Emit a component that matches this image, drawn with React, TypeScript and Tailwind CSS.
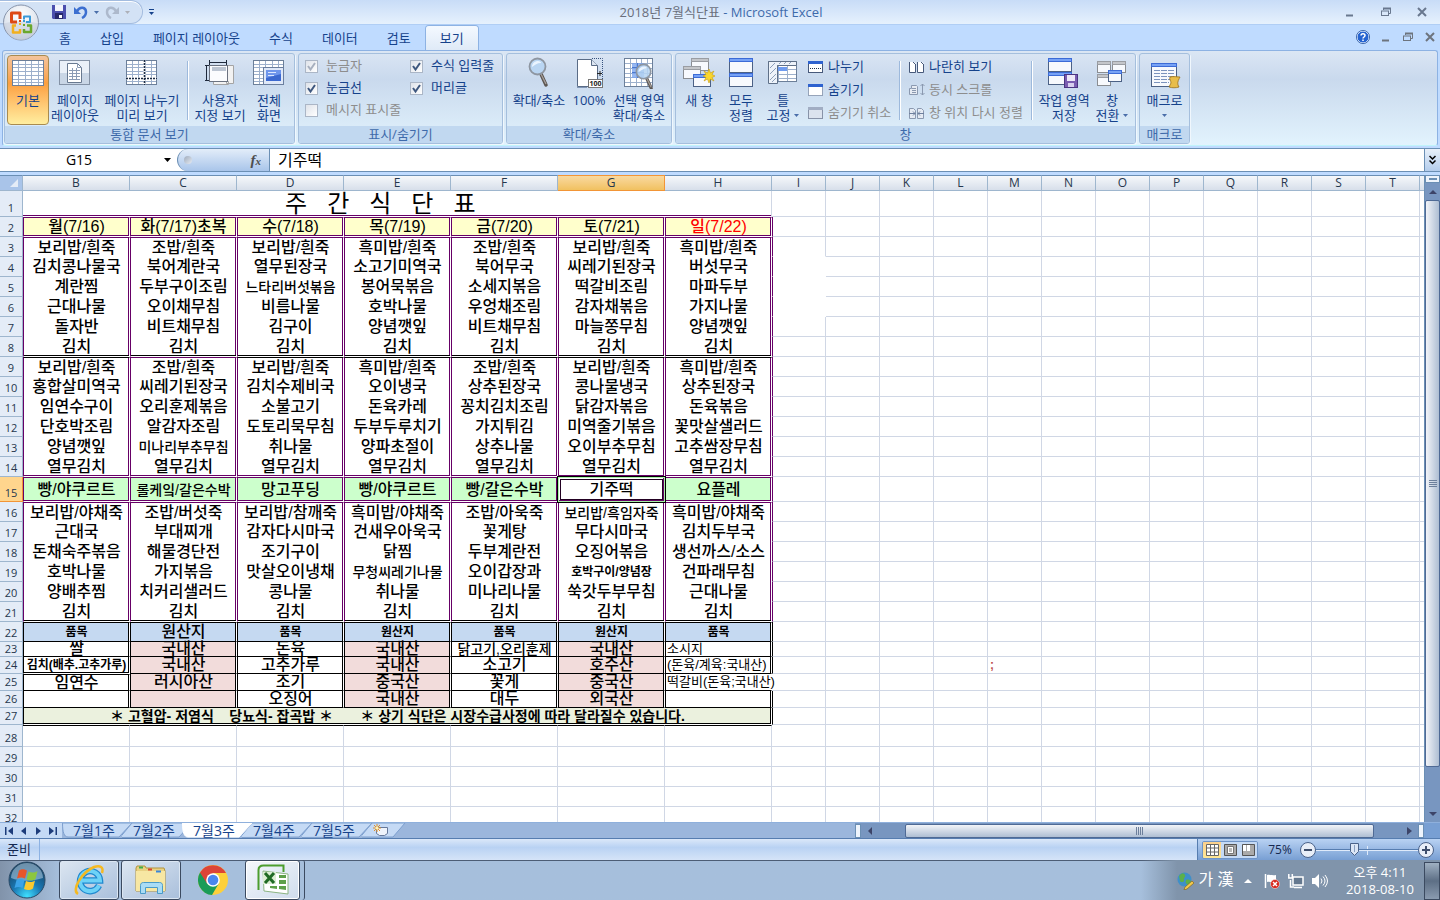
import type { ReactNode } from "react";
import clsx from "clsx";

type Size = "md" | "sm" | "xs";
type Cell = string | [string, Size];

const PLAIN_COLUMNS = ["I", "J", "K", "L", "M", "N", "O", "P", "Q", "R", "S", "T"];
const MENU_COLUMNS = ["B", "C", "D", "E", "F", "G", "H"];

const rowHeights: Record<number, number> = {
  1: 26, 15: 25, 23: 15, 24: 17, 25: 17, 26: 17, 27: 17, 28: 22,
};

const menuRows: Record<number, Cell[]> = {
  2: ["월(7/16)", "화(7/17)초복", "수(7/18)", "목(7/19)", "금(7/20)", "토(7/21)", "일(7/22)"],
  3: ["보리밥/흰죽", "조밥/흰죽", "보리밥/흰죽", "흑미밥/흰죽", "조밥/흰죽", "보리밥/흰죽", "흑미밥/흰죽"],
  4: ["김치콩나물국", "북어계란국", "열무된장국", "소고기미역국", "북어무국", "씨레기된장국", "버섯무국"],
  5: ["계란찜", "두부구이조림", ["느타리버섯볶음", "sm"], "봉어묵볶음", "소세지볶음", "떡갈비조림", "마파두부"],
  6: ["근대나물", "오이채무침", "비름나물", "호박나물", "우엉채조림", "감자채볶음", "가지나물"],
  7: ["돌자반", "비트채무침", "김구이", "양념깻잎", "비트채무침", "마늘쫑무침", "양념깻잎"],
  8: ["김치", "김치", "김치", "김치", "김치", "김치", "김치"],
  9: ["보리밥/흰죽", "조밥/흰죽", "보리밥/흰죽", "흑미밥/흰죽", "조밥/흰죽", "보리밥/흰죽", "흑미밥/흰죽"],
  10: ["홍합살미역국", "씨레기된장국", "김치수제비국", "오이냉국", "상추된장국", "콩나물냉국", "상추된장국"],
  11: ["임연수구이", "오리훈제볶음", "소불고기", "돈육카레", "꽁치김치조림", "닭감자볶음", "돈육볶음"],
  12: ["단호박조림", "알감자조림", "도토리묵무침", "두부두루치기", "가지튀김", "미역줄기볶음", "꽃맛살샐러드"],
  13: ["양념깻잎", ["미나리부추무침", "sm"], "취나물", "양파초절이", "상추나물", "오이부추무침", "고추쌈장무침"],
  14: ["열무김치", "열무김치", "열무김치", "열무김치", "열무김치", "열무김치", "열무김치"],
  15: ["빵/야쿠르트", ["롤케잌/갈은수박", "sm"], "망고푸딩", "빵/야쿠르트", "빵/갈은수박", "기주떡", "요플레"],
  16: ["보리밥/야채죽", "조밥/버섯죽", "보리밥/참깨죽", "흑미밥/야채죽", "조밥/아욱죽", ["보리밥/흑임자죽", "sm"], "흑미밥/야채죽"],
  17: ["근대국", "부대찌개", "감자다시마국", "건새우아욱국", "꽃게탕", "무다시마국", "김치두부국"],
  18: ["돈채숙주볶음", "해물경단전", "조기구이", "닭찜", "두부계란전", "오징어볶음", "생선까스/소스"],
  19: ["호박나물", "가지볶음", "맛살오이냉채", ["무청씨레기나물", "sm"], "오이갑장과", ["호박구이/양념장", "xs"], "건파래무침"],
  20: ["양배추찜", "치커리샐러드", "콩나물", "취나물", "미나리나물", "쑥갓두부무침", "근대나물"],
  21: ["김치", "김치", "김치", "김치", "김치", "김치", "김치"],
  22: [["품목", "xs"], "원산지", ["품목", "xs"], ["원산지", "xs"], ["품목", "xs"], ["원산지", "xs"], ["품목", "xs"]],
  23: ["쌀", "국내산", "돈육", "국내산", ["닭고기,오리훈제", "sm"], "국내산", "소시지"],
  24: [["김치(배추.고추가루)", "xs"], "국내산", "고추가루", "국내산", "소고기", "호주산", "(돈육/계육:국내산)"],
  25: ["임연수", "러시아산", "조기", "중국산", "꽃게", "중국산", "떡갈비(돈육;국내산)"],
  26: ["", "", "오징어", "국내산", "대두", "외국산", ""],
};

const TITLE = "주   간   식   단   표     ";
const NOTE = "＊ 고혈압- 저염식    당뇨식- 잡곡밥 ＊       ＊ 상기 식단은 시장수급사정에 따라 달라질수 있습니다.";

const sizeClass: Record<Size, string> = {
  md: "text-[16px] font-medium",
  sm: "text-[14px] font-medium",
  xs: "text-[12px] font-bold",
};

// Double rules are one line inside this cell, a white gap, and one line in the next cell.
const getCellBorder = (row: number, col: number) => {
  if (row === 24 && col === 0) {
    return "border-l border-l-black border-b border-b-white shadow-[inset_-1px_-1px_0_0_#000]";
  }
  if (row === 25 && col === 0) {
    return "border-l border-l-black border-t border-t-black border-b border-b-black shadow-[inset_-1px_0_0_0_#000]";
  }
  if (row === 25 && col === 6) {
    return "border-l border-l-black border-b border-b-black";
  }
  if (row === 22) {
    return "border-l border-l-black border-t border-t-black border-b border-b-black shadow-[inset_-1px_0_0_0_#000]";
  }
  if (row > 22) {
    return "border-l border-l-black border-b border-b-black shadow-[inset_-1px_0_0_0_#000]";
  }
  if (row === 2 || row === 15) {
    return "border-l border-l-[#660066] border-t border-t-[#660066] border-b border-b-white shadow-[inset_-1px_-1px_0_0_#660066]";
  }
  if (row === 14) {
    return "border-l border-l-[#660066] border-b border-b-white shadow-[inset_-1px_-1px_0_0_#660066]";
  }
  if (row === 8 || row === 21) {
    return "border-l border-l-[#660066] border-b border-b-white shadow-[inset_0_-1px_0_0_#000,inset_-1px_0_0_0_#660066]";
  }
  if (row === 9 && col !== 1) {
    return "border-l border-l-[#660066] border-t border-t-black shadow-[inset_-1px_0_0_0_#660066]";
  }
  if (row === 3 || row === 9 || row === 16) {
    return "border-l border-l-[#660066] border-t border-t-[#660066] shadow-[inset_-1px_0_0_0_#660066]";
  }
  return "border-l border-l-[#660066] shadow-[inset_-1px_0_0_0_#660066]";
};

const getCellFill = (row: number, col: number) => {
  if (row === 2) return "bg-[#ffffcc]";
  if (row === 15) return col === 5 ? "bg-white" : "bg-[#ccffcc]";
  if (row === 22) return "bg-[#c5d9f1]";
  if (row > 22 && col % 2 === 1) return "bg-[#f2dcdb]";
  return "bg-white";
};

const MenuCell = ({ cell, row, col }: { cell: Cell; row: number; col: number }) => {
  const [text, size]: [string, Size] = typeof cell === "string" ? [cell, "md"] : cell;
  const isSource = col === 6 && row > 22;
  const isSelected = row === 15 && col === 5;

  return (
    <td
      className={clsx(
        "border-r border-r-white p-0 whitespace-nowrap leading-[14px]",
        getCellBorder(row, col),
        getCellFill(row, col),
        row === 2 && col === 6 ? "text-[#ff0000]" : "text-black",
        isSource ? "text-left text-[13px]" : "text-center",
        !isSource && sizeClass[size],
        isSelected && "relative",
      )}
    >
      {isSelected && (
        <span className="pointer-events-none absolute -inset-0.5 border border-black">
          <span className="absolute inset-0 border border-[#a8f0a8]" />
          <span className="absolute inset-0.5 border border-[#220022]" />
        </span>
      )}
      <span className={clsx("flex h-[14px] items-center", isSource ? "pl-px" : "justify-center")}>{text}</span>
    </td>
  );
};

const PlainCells = ({ row }: { row: number }) => (
  <>
    {PLAIN_COLUMNS.map((letter) => {
      const isBlank = letter === "I" && row >= 3 && row <= 6;
      return (
        <td
          key={letter}
          className={clsx(
            "border-r border-b p-0 pl-0.5 text-[12px] leading-[14px] font-bold text-[#c0504d]",
            isBlank && row > 3 ? "border-r-white" : "border-r-[#d0d7e5]",
            isBlank ? "border-b-white" : "border-b-[#d0d7e5]",
            letter === "I" && row > 1 && row < 22 && "border-l border-l-[#660066]",
            letter === "I" && row > 21 && row < 28 && row !== 25 && "border-l border-l-black",
          )}
        >
          {letter === "M" && row === 24 ? ";" : null}
        </td>
      );
    })}
    <td className="border-b border-[#d0d7e5] p-0" />
  </>
);

const Sheet = () => (
  <div className="min-w-0 flex-1 overflow-hidden bg-white">
    <table className="w-full table-fixed border-separate border-spacing-0 font-['Liberation_Sans','Noto_Sans_CJK_KR',sans-serif]">
      <colgroup>
        <col className="w-[23px]" />
        {MENU_COLUMNS.map((letter) => <col key={letter} className="w-[107px]" />)}
        {PLAIN_COLUMNS.map((letter) => <col key={letter} className="w-[54px]" />)}
        <col />
      </colgroup>
      <thead>
        <tr className="h-4 bg-linear-to-b from-[#f8fafc] to-[#d5dde9] font-['Open_Sans','Noto_Sans_CJK_KR',sans-serif]">
          <th className="border-t border-r border-b border-[#9eb6ce] border-t-[#6b8fb4] bg-[#a9c4e9] p-0">
            <svg className="ml-auto mr-1 block h-2 w-2" viewBox="0 0 8 8"><path d="M8 0v8H0z" fill="#e4ecf7" /></svg>
          </th>
          {[...MENU_COLUMNS, ...PLAIN_COLUMNS].map((letter) => (
            <th
              key={letter}
              className={clsx(
                "border-t border-r border-b p-0 text-center text-[12px] leading-[14px] font-normal text-[#26374d]",
                letter === "G"
                  ? "border-[#f29536] bg-linear-to-b from-[#f9d99f] to-[#f1c15f]"
                  : "border-[#9eb6ce] border-t-[#6b8fb4]",
              )}
            >
              {letter}
            </th>
          ))}
          <th className="border-t border-b border-[#9eb6ce] border-t-[#6b8fb4] p-0" />
        </tr>
      </thead>
      <tbody>
        {Array.from({ length: 32 }, (_, index) => index + 1).map((row) => (
          <tr key={row} style={{ height: rowHeights[row] ?? 20 }}>
            <th
              scope="row"
              className={clsx(
                "border-r border-b p-0 text-center align-bottom font-['Open_Sans','Noto_Sans_CJK_KR',sans-serif] text-[11px] leading-[14px] font-normal text-[#26374d]",
                row !== 23 && "pb-px",
                row === 15 ? "border-[#f29536] bg-[#ffd58d]" : "border-[#9eb6ce] bg-[#e4ecf7]",
              )}
            >
              {row}
            </th>
            {row === 1 && (
              <td
                colSpan={7}
                className="border-r border-b border-r-[#d0d7e5] border-b-white p-0 text-center text-[24px] leading-6 whitespace-pre shadow-[inset_0_-1px_0_0_#660066]"
              >
                {TITLE}
              </td>
            )}
            {row === 27 && (
              <td
                colSpan={7}
                className="border-r border-b border-l border-r-white border-b-white border-l-black bg-[#ebf1de] p-0 text-center text-[14px] leading-[14px] font-bold whitespace-pre shadow-[inset_-1px_-1px_0_0_#000]"
              >
                {NOTE}
              </td>
            )}
            {menuRows[row]?.map((cell, col) => <MenuCell key={col} cell={cell} row={row} col={col} />)}
            {row > 27 && MENU_COLUMNS.map((letter) => (
              <td
                key={letter}
                className={clsx("border-r border-b border-[#d0d7e5] p-0", row === 28 && "border-t border-t-black")}
              />
            ))}
            <PlainCells row={row} />
          </tr>
        ))}
      </tbody>
    </table>
  </div>
);

/* ---------- icons ---------- */

const GridLines = ({ x, y, w, h, cols, rows }: { x: number; y: number; w: number; h: number; cols: number; rows: number }) => (
  <g>
    <rect x={x + 0.5} y={y + 0.5} width={w - 1} height={h - 1} fill="#fff" stroke="#6c7f99" />
    {Array.from({ length: cols - 1 }, (_, i) => (
      <path key={`c${i}`} d={`M${x + Math.round(((i + 1) * w) / cols) + 0.5} ${y + 1}v${h - 2}`} stroke="#9db0cc" />
    ))}
    {Array.from({ length: rows - 1 }, (_, i) => (
      <path key={`r${i}`} d={`M${x + 1} ${y + Math.round(((i + 1) * h) / rows) + 0.5}h${w - 2}`} stroke="#9db0cc" />
    ))}
  </g>
);

const MiniWindow = ({ x, y, w, h, tone = "blue" }: { x: number; y: number; w: number; h: number; tone?: "blue" | "gray" }) => (
  <g>
    <rect x={x + 0.5} y={y + 0.5} width={w - 1} height={h - 1} fill="#f7f9fd" stroke={tone === "blue" ? "#4c6185" : "#8a8d92"} />
    <rect x={x} y={y} width={w} height="4" fill={tone === "blue" ? "#3c6bd6" : "#9a9da3"} />
    <rect x={x + 1} y={y + 1} width={w - 2} height="2" fill={tone === "blue" ? "#77a2f5" : "#c4c6ca"} />
  </g>
);

const Icon = ({ children }: { children: ReactNode }) => (
  <svg className="mx-auto block h-8 w-8 shrink-0" viewBox="0 0 32 32" fill="none" aria-hidden="true">{children}</svg>
);

const NormalIcon = () => <Icon><GridLines x={0} y={3} w={32} h={26} cols={5} rows={7} /></Icon>;

const PageLayoutIcon = () => (
  <Icon>
    <rect x="0.5" y="3.5" width="30" height="24" fill="#eaf0f8" stroke="#8492a6" />
    <path d="M1 16h29v11H1z" fill="#c9d6e6" />
    <path d="M8.5 6.5h10l4 4v15h-14z" fill="#fff" stroke="#687990" />
    <path d="M18.5 6.5v4h4M10 13.5h11M10 16.5h11M10 19.5h11M10 22.5h11M13.5 11v12M17.5 11v12" stroke="#8a9bb5" />
  </Icon>
);

const PageBreakIcon = () => (
  <Icon>
    <GridLines x={0} y={3} w={31} h={25} cols={5} rows={7} />
    <path d="M18.5 3v25M0 21.5h31" stroke="#fff" strokeWidth="2" />
    <path d="M18.5 3v25M0 21.5h31" stroke="#1d2c44" strokeWidth="1.6" strokeDasharray="2 1" />
  </Icon>
);

const CustomViewIcon = () => (
  <Icon>
    <path d="M22.5 8.5h7v18h-7zM9.5 24.5h15v3h-15z" fill="#f2f2f2" stroke="#a4a4a4" />
    <rect x="5.500" y="8.500" width="18" height="16" fill="#fbfcfe" stroke="#6b7280" />
    <rect x="8" y="10" width="14" height="4" fill="#bcc5d2" />
    <path d="M5 5.500h18M5.500 3v5M22.500 3v5M2.500 8v16M1 8.500h4M1 23.500h4" stroke="#1e293b" />
  </Icon>
);

const FullScreenIcon = () => (
  <Icon>
    <GridLines x={0} y={3} w={31} h={25} cols={5} rows={7} />
    <rect x="10.500" y="10.500" width="20" height="17" fill="#dfe8f8" stroke="#6b7f9f" />
    <rect x="13" y="13" width="15" height="11" fill="#3c69d0" />
    <path d="M13 13h15v4l-15 4z" fill="#6f96ec" />
    <path d="M15 15.500h8M15 18.500h6" stroke="#dbe7ff" />
  </Icon>
);

const Magnifier = ({ x = 0, y = 0 }: { x?: number; y?: number }) => (
  <g transform={`translate(${x} ${y})`}>
    <path d="M13 17l5 11" stroke="#5d5753" strokeWidth="3.500" strokeLinecap="round" />
    <path d="M13 17l5 10" stroke="#a8a29c" strokeWidth="1.200" />
    <circle cx="9.500" cy="9.500" r="8" fill="#b5d3f2" fillOpacity=".85" stroke="#8e96a1" strokeWidth="1.800" />
    <path d="M4 10c0-4 3-6 6-6 2 0 3 1 3 2-4 0-6 2-9 4z" fill="#eaf4ff" />
  </g>
);

const ZoomIcon = () => <Icon><Magnifier x={5} /></Icon>;

const HundredIcon = () => (
  <Icon>
    <path d="M4.500 2.500h14l6 6v21h-20z" fill="#fff" stroke="#5a6c86" />
    <path d="M18.500 2.500v6h6" fill="#dce5f1" stroke="#5a6c86" />
    <path d="M19 1.500h10.500v22M4.500 30.500h10" stroke="#35507c" strokeDasharray="1 1" />
    <path d="M24 16.500h5M27 14v5" stroke="#222" />
    <rect x="15.500" y="22.500" width="14" height="8" fill="#fff" stroke="#777" />
    <text x="22.500" y="29" textAnchor="middle" fontSize="7" fontWeight="700" fill="#222">100</text>
  </Icon>
);

const ZoomSelectionIcon = () => (
  <Icon>
    <GridLines x={1} y={1} w={29} h={29} cols={5} rows={6} />
    <path d="M9 6h12v15H9z" fill="#7ba5ef" fillOpacity=".8" />
    <path d="M9 10.500h12M9 15.500h12M14.500 6v15" stroke="#4a78d0" />
    <g transform="translate(12 6) scale(.9)"><Magnifier /></g>
  </Icon>
);

const NewWindowIcon = () => (
  <Icon>
    <MiniWindow x={8} y={1} w={18} h={13} tone="gray" />
    <MiniWindow x={0} y={9} w={18} h={13} tone="gray" />
    <MiniWindow x={10} y={17} w={18} h={13} />
    <path d="M26 12l1.500 4 3.500-2-2 3.500 3 1.500-3 1.500 2 3.500-3.500-2-1.500 4-1.500-4-3.500 2 2-3.500-3-1.500 3-1.500-2-3.500 3.500 2z" fill="#f9d62e" stroke="#c69a10" strokeWidth=".6" />
  </Icon>
);

const ArrangeIcon = () => (
  <Icon><MiniWindow x={4} y={1} w={24} h={15} /><MiniWindow x={4} y={16} w={24} h={14} /></Icon>
);

const FreezeIcon = () => (
  <Icon>
    <GridLines x={1} y={4} w={29} h={21} cols={3} rows={5} />
    <path d="M1.500 4.500h28v4h-19v18h-9z" fill="#eef3fa" stroke="#5f7088" />
    <path d="M3 11l5-5M3 17l6-6M3 23l6-6M12 7l2-2M17 7l2-2M22 7l2-2M5 25l4-4" stroke="#8da0bb" />
    <path d="M10.500 8.500v16" stroke="#5f7088" />
    <rect x="11" y="10" width="9" height="4" fill="#6f9cf0" />
  </Icon>
);

const SaveWorkspaceIcon = () => (
  <Icon>
    <MiniWindow x={0} y={1} w={24} h={14} />
    <MiniWindow x={0} y={15} w={24} h={13} />
    <rect x="16.500" y="17.500" width="13" height="13" fill="#7a5cb0" stroke="#4b3582" />
    <path d="M19 18h8v6h-8z" fill="#eee9f8" />
    <path d="M20 26h6v4h-6z" fill="#d8cfee" />
  </Icon>
);

const SwitchWindowIcon = () => (
  <Icon>
    <MiniWindow x={1} y={4} w={14} h={12} tone="gray" />
    <MiniWindow x={16} y={4} w={14} h={12} tone="gray" />
    <MiniWindow x={1} y={17} w={14} h={12} tone="gray" />
    <MiniWindow x={12} y={13} w={14} h={12} />
  </Icon>
);

const MacroIcon = () => (
  <Icon>
    <MiniWindow x={2} y={6} w={26} h={24} />
    <path d="M5 13.500h20M5 16.500h20M5 19.500h20M5 22.500h16M5 25.500h15" stroke="#7b93bd" strokeDasharray="6 1" />
    <path d="M21 20c3-1 8 0 10 0-1 2-3 5-2 8l1 2c-3 1-7 1-10 0l2-4c0-2-2-4-1-6z" fill="#e8bd4a" stroke="#9a7016" strokeWidth=".8" />
  </Icon>
);

type SmallKind = "split" | "hide" | "unhide" | "side" | "sync" | "reset";

const SmallIcon = ({ kind }: { kind: SmallKind }) => (
  <svg className="block h-4 w-4 shrink-0" viewBox="0 0 16 16" fill="none" aria-hidden="true">
    {(kind === "split" || kind === "hide" || kind === "unhide") && (
      <>
        <rect x=".5" y="2.500" width="14" height="11" fill={kind === "unhide" ? "#dbe3ee" : "#fff"} stroke={kind === "unhide" ? "#8793a8" : "#47597a"} strokeDasharray={kind === "hide" ? "1 1" : undefined} />
        <path d="M0 2h15v3H0z" fill={kind === "unhide" ? "#a1adc3" : "#2e62cf"} />
      </>
    )}
    {kind === "split" && <path d="M2 9.500h11" stroke="#1f2f4a" strokeDasharray="1 1" />}
    {kind === "side" && (
      <>
        <path d="M1 3h4l2 2v8H1zM9 3h4l2 2v8H9z" fill="#fff" />
        <path d="M.5 3v10.500h6V5M8.500 3v10.500h6V5M4 3l2.500 2.500M12 3l2.500 2.500" stroke="#47597a" />
      </>
    )}
    {kind === "sync" && (
      <>
        <path d="M.5 6.500h2v-3h5l1 1v8h-8z" fill="#e6ebf3" stroke="#8b99b0" />
        <path d="M3 6.500h4M3 8.500h4M3 10.500h4M13.500 2v11M11.500 4l2-2 2 2M11.500 11l2 2 2-2" stroke="#8b99b0" />
      </>
    )}
    {kind === "reset" && (
      <>
        <path d="M.5 3.500h4l2 2v8h-6zM8.500 3.500h4l2 2v8h-6z" fill="#e6ebf3" stroke="#8b99b0" />
        <path d="M0 8.500h6M4 6.500l2 2-2 2M15 8.500H9M11 6.500l-2 2 2 2" stroke="#6d7f9d" />
      </>
    )}
  </svg>
);

/* ---------- ribbon ---------- */

const DownArrow = ({ className = "text-[#4a6ea9]" }: { className?: string }) => (
  <svg className={clsx("inline-block h-[3px] w-[5px] shrink-0", className)} viewBox="0 0 5 3" aria-hidden="true"><path d="M0 0h5L2.500 3z" fill="currentColor" /></svg>
);

type BigButtonProps = {
  icon: ReactNode;
  lines: string[];
  width: string;
  hasMenu?: boolean;
  isActive?: boolean;
};

const BigButton = ({ icon, lines, width, hasMenu, isActive }: BigButtonProps) => (
  <button
    type="button"
    className={clsx(
      "flex h-[70px] shrink-0 flex-col items-center rounded-sm border pt-px whitespace-nowrap",
      width,
      isActive
        ? "border-[#a98b4f] bg-linear-to-b from-[#f3c49c] via-[#fb9f3f] via-40% to-[#ffee9f]"
        : "border-transparent",
    )}
  >
    {icon}
    <span className="mt-1 block h-[15px] leading-[15px]">{lines[0]}</span>
    <span className="flex h-[15px] items-center gap-1 leading-[15px]">
      {lines[1]}
      {hasMenu && <DownArrow />}
    </span>
  </button>
);

const Separator = () => <div className="mx-1 my-1.5 w-0.5 shrink-0 border-l border-[#9db9dc] bg-white" />;

const RibbonGroup = ({ title, width, children }: { title: string; width: string; children: ReactNode }) => (
  <section className={clsx("flex h-[91px] shrink-0 flex-col overflow-hidden rounded-[3px] border border-[#a5bfdd] shadow-[1px_1px_0_#f0f7fd]", width)}>
    <div className="flex h-[72px] px-0.5 pt-px">{children}</div>
    <h2 className="flex-1 bg-[#c1d8f0] text-center text-[13px] leading-4 text-[#3e6aaa]">{title}</h2>
  </section>
);

const Check = ({ label, checked, disabled }: { label: string; checked?: boolean; disabled?: boolean }) => (
  <label className={clsx("flex h-[22px] items-center gap-2 whitespace-nowrap", disabled && "text-[#8d8d8d]")}>
    <span className="relative block h-[13px] w-[13px]">
      <input
        type="checkbox"
        defaultChecked={checked}
        disabled={disabled}
        className="block h-[13px] w-[13px] appearance-none border border-[#abb6c6] bg-linear-to-br from-[#dfe3ea] to-white"
      />
      {checked && (
        <svg className="pointer-events-none absolute inset-0 h-[13px] w-[13px]" viewBox="0 0 13 13" fill="none">
          <path d="M3 6l2.500 3.500L10 3" stroke={disabled ? "#a7b0bf" : "#3f587f"} strokeWidth="2" />
        </svg>
      )}
    </span>
    {label}
  </label>
);

const SmallButton = ({ kind, label, disabled }: { kind: SmallKind; label: string; disabled?: boolean }) => (
  <button type="button" disabled={disabled} className={clsx("flex h-[23px] items-center gap-1 whitespace-nowrap", disabled && "text-[#8d8d8d]")}>
    <SmallIcon kind={kind} />
    {label}
  </button>
);

const Ribbon = () => (
  <div className="mx-0.5 flex h-[96px] shrink-0 gap-[3px] overflow-hidden rounded-[3px] border border-[#8db2e3] border-b-[#c0f4fb] bg-linear-to-b from-[#dbe6f4] via-[#c9d9ed] via-30% to-[#e2f3fd] pt-0.5 pl-px text-[13px] text-[#15428b]">
    <RibbonGroup title="통합 문서 보기" width="w-[291px]">
      <BigButton icon={<NormalIcon />} lines={["기본"]} width="w-[42px]" isActive />
      <BigButton icon={<PageLayoutIcon />} lines={["페이지", "레이아웃"]} width="w-[52px]" />
      <BigButton icon={<PageBreakIcon />} lines={["페이지 나누기", "미리 보기"]} width="w-[82px]" />
      <Separator />
      <BigButton icon={<CustomViewIcon />} lines={["사용자", "지정 보기"]} width="w-[54px]" />
      <BigButton icon={<FullScreenIcon />} lines={["전체", "화면"]} width="w-[44px]" />
    </RibbonGroup>
    <RibbonGroup title="표시/숨기기" width="w-[205px]">
      <div className="grid grid-cols-[105px_1fr] content-start pl-1">
        <Check label="눈금자" checked disabled />
        <Check label="수식 입력줄" checked />
        <Check label="눈금선" checked />
        <Check label="머리글" checked />
        <Check label="메시지 표시줄" disabled />
      </div>
    </RibbonGroup>
    <RibbonGroup title="확대/축소" width="w-[166px]">
      <BigButton icon={<ZoomIcon />} lines={["확대/축소"]} width="w-[60px]" />
      <BigButton icon={<HundredIcon />} lines={["100%"]} width="w-[40px]" />
      <BigButton icon={<ZoomSelectionIcon />} lines={["선택 영역", "확대/축소"]} width="w-[60px]" />
    </RibbonGroup>
    <RibbonGroup title="창" width="w-[461px]">
      <BigButton icon={<NewWindowIcon />} lines={["새 창"]} width="w-[42px]" />
      <BigButton icon={<ArrangeIcon />} lines={["모두", "정렬"]} width="w-[42px]" />
      <BigButton icon={<FreezeIcon />} lines={["틀", "고정"]} width="w-[42px]" hasMenu />
      <div className="ml-1 w-[87px]">
        <SmallButton kind="split" label="나누기" />
        <SmallButton kind="hide" label="숨기기" />
        <SmallButton kind="unhide" label="숨기기 취소" disabled />
      </div>
      <Separator />
      <div className="ml-1 w-[118px]">
        <SmallButton kind="side" label="나란히 보기" />
        <SmallButton kind="sync" label="동시 스크롤" disabled />
        <SmallButton kind="reset" label="창 위치 다시 정렬" disabled />
      </div>
      <Separator />
      <BigButton icon={<SaveWorkspaceIcon />} lines={["작업 영역", "저장"]} width="w-[54px]" />
      <BigButton icon={<SwitchWindowIcon />} lines={["창", "전환"]} width="w-[42px]" hasMenu />
    </RibbonGroup>
    <RibbonGroup title="매크로" width="w-[51px]">
      <BigButton icon={<MacroIcon />} lines={["매크로", ""]} width="w-[45px]" hasMenu />
    </RibbonGroup>
  </div>
);

/* ---------- title and tabs ---------- */

const WindowGlyph = ({ kind }: { kind: "min" | "restore" | "close" }) => (
  <svg className="block h-3 w-3" viewBox="0 0 12 12" fill="none" aria-hidden="true">
    {kind === "min" && <path d="M2 9.500h7" stroke="currentColor" strokeWidth="2" />}
    {kind === "restore" && (
      <>
        <path d="M3.500 4V2.500h7v5H9" stroke="currentColor" />
        <path d="M3 2.500h8" stroke="currentColor" strokeWidth="2" />
        <rect x="1.500" y="5" width="7" height="4.500" stroke="currentColor" />
      </>
    )}
    {kind === "close" && <path d="M2 2l8 8M10 2l-8 8" stroke="currentColor" strokeWidth="2" />}
  </svg>
);

const OfficeButton = () => (
  <button type="button" aria-label="Office" className="absolute top-1 left-0.5 z-10 h-[38px] w-[38px]">
    <svg viewBox="0 0 38 38" fill="none">
      <defs>
        <radialGradient id="orb" cx=".5" cy=".3" r=".8">
          <stop offset="0" stopColor="#fff" />
          <stop offset=".6" stopColor="#dfe5ee" />
          <stop offset="1" stopColor="#a9b6ca" />
        </radialGradient>
      </defs>
      <circle cx="19" cy="18.500" r="17.500" fill="url(#orb)" stroke="#8794ab" />
      <path d="M2.500 19.500c9-3 24-3 33 0a16.500 16.500 0 0 1-33 0z" fill="#c9d1de" fillOpacity=".6" />
      <path d="M15 18H9.500V9H18v6" stroke="#dd4814" strokeWidth="3" strokeLinejoin="round" />
      <path d="M22 15.500v-3h6V18h-4" stroke="#3a9ad9" strokeWidth="2" strokeLinejoin="round" />
      <path d="M14 21.500h-3v7h7V25" stroke="#f2b01e" strokeWidth="2.500" strokeLinejoin="round" />
      <path d="M25 21.500h4V28h-7v-3" stroke="#6aa82d" strokeWidth="2.500" strokeLinejoin="round" />
      <path d="M17 19h2v2h-2z" fill="#f2b01e" />
      <path d="M17 16h2v2h-2z" fill="#dd4814" />
      <path d="M21 16h2v2h-2z" fill="#3a9ad9" />
      <path d="M21 20h2v2h-2z" fill="#6aa82d" />
    </svg>
  </button>
);

const QuickAccess = () => (
  <div className="flex h-6 w-[143px] items-center rounded-r-full border border-l-0 border-[#a3bcdf] bg-[#d3e2f5] pl-[52px] shadow-[inset_0_1px_0_#fff]">
    <button type="button" aria-label="저장" className="mr-1.5">
      <svg className="block h-3.5 w-3.5" viewBox="0 0 14 14">
        <path d="M0 0h14v14H1l-1-1z" fill="#4b4fae" />
        <path d="M3 0h8v6H3z" fill="#f3f5fc" />
        <path d="M3 8h8v6H3z" fill="#26286b" />
        <path d="M7 10h3v3H7z" fill="#fff" />
      </svg>
    </button>
    <button type="button" aria-label="실행 취소" className="mr-1.5 ml-0.5 flex items-center gap-1.5">
      <svg className="block h-3.5 w-3.5" viewBox="0 0 14 14" fill="none">
        <path d="M3 6c3-5 9-4 9 1 0 3-2 5-4 6" stroke="#3c6fd0" strokeWidth="2.500" />
        <path d="M0 2v7h7z" fill="#3c6fd0" />
      </svg>
      <DownArrow />
    </button>
    <button type="button" aria-label="다시 실행" className="flex items-center gap-1.5">
      <svg className="block h-3.5 w-3.5" viewBox="0 0 14 14" fill="none">
        <path d="M11 6C8 1 2 2 2 7c0 3 2 5 4 6" stroke="#adb9cc" strokeWidth="2.500" />
        <path d="M14 2v7H7z" fill="#adb9cc" />
      </svg>
      <DownArrow className="text-[#adb0b8]" />
    </button>
  </div>
);

const TABS = ["홈", "삽입", "페이지 레이아웃", "수식", "데이터", "검토", "보기"];

const Header = () => (
  <header className="relative shrink-0">
    <OfficeButton />
    <div className="flex h-[25px] items-center border-b border-[#b0cef5] bg-linear-to-b from-[#c8dcf7] to-[#e6f1fd]">
      <QuickAccess />
      <button type="button" aria-label="도구 모음 사용자 지정" className="ml-1.5 flex flex-col items-center gap-0.5 text-[#15428b]">
        <span className="block h-px w-[5px] bg-[#15428b]" />
        <DownArrow className="text-[#15428b]" />
      </button>
      <h1 className="flex-1 pr-14 text-center text-[13px] leading-4 text-[#3e6aaa]">
        <span className="text-[#6a6f7c]">2018년 7월식단표</span> - Microsoft Excel
      </h1>
      <div className="flex gap-6 pr-3 text-[#69788f]">
        <button type="button" aria-label="최소화"><WindowGlyph kind="min" /></button>
        <button type="button" aria-label="이전 크기로"><WindowGlyph kind="restore" /></button>
        <button type="button" aria-label="닫기"><WindowGlyph kind="close" /></button>
      </div>
    </div>
    <div className="flex h-[25px] items-end gap-px bg-[#bfdbff] pl-[45px] text-[13px] text-[#15428b]">
      {TABS.map((tab) => (
        <button
          key={tab}
          type="button"
          className={clsx(
            "h-6 px-3.5 leading-6 whitespace-nowrap",
            tab === "보기" && "rounded-t-[3px] bg-linear-to-b from-[#f4f9ff] to-[#dfeaf7] shadow-[0_0_0_1px_#8db2e3]",
          )}
        >
          {tab}
        </button>
      ))}
      <div className="mb-1.5 ml-auto flex items-center gap-2.5 pr-1 text-[#6d747e]">
        <button type="button" aria-label="도움말">
          <svg className="block h-3.5 w-3.5" viewBox="0 0 14 14" fill="none">
            <circle cx="7" cy="7" r="6" fill="#2563d0" stroke="#e8f1ff" />
            <circle cx="7" cy="7" r="6.600" stroke="#24539e" strokeWidth=".8" />
            <path d="M5 5.500c0-2.500 4-2.500 4 0 0 1.500-2 1.500-2 3M7 9.500V11" stroke="#fff" strokeWidth="1.500" />
          </svg>
        </button>
        <button type="button" aria-label="창 최소화"><WindowGlyph kind="min" /></button>
        <button type="button" aria-label="창 복원"><WindowGlyph kind="restore" /></button>
        <button type="button" aria-label="창 닫기"><WindowGlyph kind="close" /></button>
      </div>
    </div>
  </header>
);

const FormulaBar = () => (
  <div className="mt-0.5 flex h-6 shrink-0 border-y border-[#6b8fb4] bg-white text-black">
    <div className="flex w-[177px] items-center">
      <input aria-label="이름 상자" defaultValue="G15" className="w-[158px] min-w-0 text-center text-[14px] leading-5" />
      <svg className="ml-1.5 h-1 w-[7px]" viewBox="0 0 7 4"><path d="M0 0h7L3.500 4z" fill="#000" /></svg>
    </div>
    <div className="flex w-[93px] items-center justify-between rounded-l-full border-x border-[#6b8fb4] bg-linear-to-b from-[#e3edf9] to-[#a9c5ea] pr-2 pl-1.5">
      <span className="block h-2 w-2 rounded-full bg-linear-to-br from-[#9fabbc] to-[#e6ebf2]" />
      <button type="button" aria-label="함수 삽입" className="font-['Liberation_Serif',serif] text-[15px] leading-5 font-bold text-[#4d4d4d] italic">
        f<span className="text-[11px]">x</span>
      </button>
    </div>
    <input aria-label="수식 입력줄" defaultValue="기주떡" className="min-w-0 flex-1 pl-2 text-[16px] leading-5" />
    <button type="button" aria-label="수식 입력줄 확장" className="flex w-4 items-center justify-center border-l border-[#6b8fb4] bg-linear-to-b from-[#e8f0fa] to-[#b4cdec]">
      <svg className="h-2.5 w-[7px]" viewBox="0 0 7 10" fill="none"><path d="M.5 1l3 3 3-3M.5 5.500l3 3 3-3" stroke="#000" strokeWidth="1.500" /></svg>
    </button>
  </div>
);

/* ---------- scroll bars, sheet tabs, status ---------- */

const Arrow = ({ d, className }: { d: string; className?: string }) => (
  <svg className={clsx("block h-2.5 w-2.5 shrink-0", className)} viewBox="0 0 10 10" aria-hidden="true"><path d={d} fill="currentColor" /></svg>
);

const VerticalScroll = () => (
  <div className="flex w-4 shrink-0 flex-col items-center border-l border-[#6b8fb4] bg-[#7896c0] text-[#3c4468]">
    <div className="flex h-2 w-full shrink-0 items-center justify-center border border-[#6b8fb4] bg-[#eef4fc]"><span className="h-0.5 w-2 bg-[#6b8fb4]" /></div>
    <button type="button" aria-label="위로" className="flex h-[17px] items-center"><Arrow d="M1 7l4-4 4 4z" /></button>
    <div className="flex w-full flex-1 flex-col pb-[38px]">
      <div className="flex w-full flex-1 flex-col items-center justify-center gap-px rounded-[2px] border border-[#4f6a95] bg-linear-to-r from-[#f2f4f8] to-[#aebed3]">
        {[0, 1, 2, 3].map((line) => <span key={line} className="h-px w-2 bg-[#6c7f9b]" />)}
      </div>
    </div>
    <button type="button" aria-label="아래로" className="flex h-[17px] items-center"><Arrow d="M1 3l4 4 4-4z" /></button>
  </div>
);

const SHEETS = ["7월1주", "7월2주", "7월3주", "7월4주", "7월5주"];

const SheetTabs = () => (
  <div className="flex h-4 shrink-0 border-t border-[#8fb0dc] bg-[#9bb6dc]">
    <div className="flex w-[62px] items-center justify-between bg-[#c5daf5] px-1 text-[#1d3c7a]">
      <button type="button" aria-label="첫 시트"><Arrow d="M1 1h1.500v8H1zM9 1v8L4 5z" /></button>
      <button type="button" aria-label="이전 시트"><Arrow d="M7 1v8L2 5z" /></button>
      <button type="button" aria-label="다음 시트"><Arrow d="M3 1v8l5-4z" /></button>
      <button type="button" aria-label="마지막 시트"><Arrow d="M7.500 1H9v8H7.500zM1 1v8l5-4z" /></button>
    </div>
    {SHEETS.map((sheet, index) => {
      const isActive = sheet === "7월3주";
      return (
        <button
          key={sheet}
          type="button"
          className={clsx("relative h-[15px] w-[60px] shrink-0 pl-1 text-center text-[14px] leading-[13px] text-[#15428b]", isActive && "z-10")}
        >
          <svg className="absolute top-0 left-0 h-[15px] w-[72px]" viewBox="0 0 72 15" aria-hidden="true">
            <path
              d={isActive || index === 0 ? "M.5 0C.5 9 2 14 6 14h51L70 0z" : "M-2 14.500L10 0h60L57 14z"}
              fill={isActive ? "#fff" : "#c5daf5"}
              stroke={isActive ? "#fff" : "#7d9fce"}
            />
          </svg>
          <span className="relative whitespace-nowrap">{sheet}</span>
        </button>
      );
    })}
    <button type="button" aria-label="워크시트 삽입" className="h-[15px] w-[46px] shrink-0">
      <svg className="block h-[15px] w-[46px]" viewBox="0 0 46 15" fill="none">
        <path d="M-2 14.500L10 0h33L31 14H0z" fill="#c5daf5" stroke="#7d9fce" />
        <path d="M14.500 4.500h11v6l-3 2h-5l-3-2z" fill="#eef3fb" stroke="#66799b" />
        <path d="M15 1v8M11 5h8M12 2l6 6M18 2l-6 6" stroke="#e0902a" />
        <circle cx="15" cy="5" r="1.500" fill="#fff3b0" />
      </svg>
    </button>
    <div className="ml-auto flex w-[41%] max-w-[585px] items-center bg-[#7896c0] text-[#3c4468]">
      <span className="h-3.5 w-1.5 border border-[#6b8fb4] bg-[#eef4fc]" />
      <button type="button" aria-label="왼쪽으로" className="ml-1"><Arrow d="M7 1v8L3 5z" /></button>
      <div className="ml-[30px] flex h-3.5 flex-1 items-center justify-center gap-px rounded-[2px] border border-[#4f6a95] bg-linear-to-b from-[#f2f4f8] to-[#aebed3]">
        {[0, 1, 2, 3].map((line) => <span key={line} className="h-2 w-px bg-[#6c7f9b]" />)}
      </div>
      <button type="button" aria-label="오른쪽으로" className="mr-1 ml-[30px]"><Arrow d="M3 1v8l5-4z" /></button>
      <span className="h-3.5 w-1.5 border border-[#6b8fb4] bg-[#eef4fc]" />
      <span className="h-full w-4 bg-[#789fd3]" />
    </div>
  </div>
);

const ViewButton = ({ label, isActive, children }: { label: string; isActive?: boolean; children: ReactNode }) => (
  <button
    type="button"
    aria-label={label}
    className={clsx("flex w-[18px] items-center justify-center", isActive ? "bg-linear-to-b from-[#fbd08c] to-[#ffe794]" : "bg-[#c5daf5]")}
  >
    <svg className="block h-3 w-[13px]" viewBox="0 0 13 12" fill="none">{children}</svg>
  </button>
);

const StatusBar = () => (
  <div className="flex h-[22px] shrink-0 border-t border-[#567db0] bg-linear-to-b from-[#dbe8f9] via-[#b9d2f3] via-40% to-[#d5e4f8] text-[13px] leading-5 text-[#15284f]">
    <span className="w-10 border-r border-[#8db2e3] pl-[7px]">준비</span>
    <div className="ml-auto flex items-center border-l border-[#567db0] bg-linear-to-b from-[#b9d2f3] to-[#789fd3] pl-1">
      <div className="flex h-[18px] overflow-hidden rounded-[2px] border border-[#6f94c6]">
        <ViewButton label="기본" isActive><path d="M.5.5h12v11H.5zM.5 4h12M.5 8h12M4.500.5v11M8.500.5v11" fill="#fff" stroke="#666" /></ViewButton>
        <ViewButton label="페이지 레이아웃"><path d="M.5.5h12v11H.5z" fill="#aaa" stroke="#555" /><path d="M3.500 2.500h6v7h-6zM5 5h3M5 7h3" fill="#fff" stroke="#777" /></ViewButton>
        <ViewButton label="페이지 나누기 미리 보기"><path d="M.5.5h12v11H.5z" fill="#aaa" stroke="#555" /><path d="M1 1h3v6H1zM5 1h3v6H5z" fill="#fff" /></ViewButton>
      </div>
      <button type="button" className="w-[42px] pl-0.5 text-[12px]">75%</button>
      <button type="button" aria-label="축소" className="flex h-4 w-4 items-center justify-center rounded-full border border-[#4a628a] bg-[#e8eef8]"><span className="h-0.5 w-2 bg-[#3f4f6d]" /></button>
      <div className="relative h-5 w-[102px]">
        <input type="range" aria-label="확대/축소" min="10" max="400" defaultValue="75" className="absolute inset-0 w-full opacity-0" />
        <svg className="pointer-events-none block h-5 w-[102px]" viewBox="0 0 102 20" fill="none">
          <path d="M0 10.500h102M51.500 6v9" stroke="#dfeafa" />
          <path d="M0 9.500h102" stroke="#567db0" />
          <path d="M34.500 3.500h8v8l-4 4-4-4z" fill="#dbe6f6" stroke="#4a628a" />
          <path d="M38.500 5v7" stroke="#8a9fc0" />
        </svg>
      </div>
      <button type="button" aria-label="확대" className="mr-1.5 flex h-4 w-4 items-center justify-center rounded-full border border-[#4a628a] bg-[#e8eef8]">
        <svg className="h-2.5 w-2.5" viewBox="0 0 10 10"><path d="M4 1h2v3h3v2H6v3H4V6H1V4h3z" fill="#3f4f6d" /></svg>
      </button>
    </div>
  </div>
);

/* ---------- taskbar ---------- */

const TaskButton = ({ label, isActive, children }: { label: string; isActive?: boolean; children: ReactNode }) => (
  <button
    type="button"
    aria-label={label}
    className={clsx(
      "flex h-10 w-[60px] items-center justify-center rounded-[3px] border border-[#3b4a60]",
      isActive
        ? "bg-linear-to-br from-[#f5f8fc] to-[#cfdcec] shadow-[inset_0_0_0_1px_#fff]"
        : "bg-linear-to-br from-[#dce6f1] to-[#a9bfdb] shadow-[inset_0_0_0_1px_#dbe6f2]",
    )}
  >
    {children}
  </button>
);

const StartOrb = () => (
  <svg className="block h-[38px] w-[38px]" viewBox="0 0 38 38">
    <defs>
      <radialGradient id="start" cx=".5" cy=".95" r=".9">
        <stop offset="0" stopColor="#3fe0ff" />
        <stop offset=".45" stopColor="#1a78b4" />
        <stop offset="1" stopColor="#17405f" />
      </radialGradient>
    </defs>
    <circle cx="19" cy="19" r="18" fill="url(#start)" stroke="#2c4a66" />
    <path d="M3 17a16 15 0 0 1 32 0c-9 3-22 4-32 0z" fill="#a9c6dd" fillOpacity=".6" />
    <path d="M11 9.500c3-2 5-1.500 8 0l-2 8c-3-1.500-5-1.500-8 0z" fill="#e8562b" />
    <path d="M20.500 10.500c3 1.500 6 1.500 9-.5l-2 8c-3 2-6 2-9 .5z" fill="#8cc63f" />
    <path d="M8.500 19c3-1.500 5-1.500 8 0l-2 8c-3-1.500-5-1.500-8 0z" fill="#3ba3e8" />
    <path d="M18 20c3 1.500 6 1.500 9-.5l-2 8c-3 2-6 2-9 .5z" fill="#fbc92e" />
  </svg>
);

const Taskbar = () => (
  <footer className="flex h-10 shrink-0 items-center bg-linear-to-r from-[#8193aa] to-[#a6bfdc] to-[60px] shadow-[inset_0_1px_0_#4c5d75]">
    <button type="button" aria-label="시작" className="mr-[13px] ml-2"><StartOrb /></button>
    <TaskButton label="Internet Explorer">
      <svg className="h-8 w-8" viewBox="0 0 32 32" fill="none">
        <path d="M26 21.500A10 10 0 1 1 27 16.500H9" stroke="#2089cf" strokeWidth="6.500" />
        <path d="M26 21.500A10 10 0 1 1 27 16.500H9" stroke="#6dd2f7" strokeWidth="4" />
        <path d="M5 30C-2 26 9 8 21 3c6-2 10 0 8 6" stroke="#f5b921" strokeWidth="2.500" />
      </svg>
    </TaskButton>
    <div className="w-0.5" />
    <TaskButton label="파일 탐색기">
      <svg className="h-8 w-8" viewBox="0 0 32 32" fill="none">
        <path d="M1 4l1-2h8l1 2h18l1 3v20H1z" fill="#e9d283" stroke="#b3943d" />
        <path d="M1 7h29v20H1z" fill="#f7e7a3" />
        <path d="M4 3.500h4" stroke="#3fae49" strokeWidth="2" />
        <path d="M13 5.500h4" stroke="#d9442f" strokeWidth="2" />
        <path d="M21 7.500h5" stroke="#3a87d8" strokeWidth="2" />
        <path d="M5.500 29.500v-8c0-2 1-3 3-3h16c2 0 3 1 3 3v8h-5v-6h-12v6z" fill="#a9dcf5" stroke="#4a9bc8" />
      </svg>
    </TaskButton>
    <button type="button" aria-label="Chrome" className="flex w-16 justify-center">
      <svg className="h-[30px] w-[30px]" viewBox="0 0 30 30">
        <circle cx="15" cy="15" r="15" fill="#fdd03b" />
        <path d="M2 7.500A15 15 0 0 0 14 30l7-12-6-3z" fill="#1a9c58" />
        <path d="M2 7.500L9 18.500 15 8h13a15 15 0 0 0-26-.5z" fill="#dc4437" />
        <circle cx="15" cy="15" r="6.800" fill="#fff" />
        <circle cx="15" cy="15" r="5.300" fill="#4a86ee" />
      </svg>
    </button>
    <div className="flex h-10 w-[60px] rounded-[3px] border-r border-[#3b4a60] pr-1 [&>button]:w-[55px]">
      <TaskButton label="Excel" isActive>
        <svg className="h-8 w-8" viewBox="0 0 32 32" fill="none">
          <path d="M1.500 26V6c0-3 2-4.500 5-4.500h20V8" stroke="#4c9e2e" strokeWidth="2" />
          <path d="M6 7l25 3v20l-24-3z" fill="#fff" stroke="#8cb583" />
          <path d="M22 11h7v3h-7zM22 16h7v4h-7zM22 22h7v4l-7-1zM13 22h7v3l-7-1z" fill="#5ea04a" />
          <path d="M6 8h13v12H6z" fill="#dcedd3" />
          <path d="M8 9l9 10M17 9L8 19" stroke="#1f6a24" strokeWidth="3" />
        </svg>
      </TaskButton>
    </div>
    <div className="ml-auto flex h-full items-center bg-linear-to-r from-[#8094ab]/0 to-[#8094ab] to-[36px] pt-px pl-9 text-white">
      <svg className="h-[18px] w-[18px]" viewBox="0 0 18 18">
        <circle cx="7.500" cy="7.500" r="7" fill="#3e8fc9" />
        <path d="M2 4c3-4 5-3 6-1s-2 3-1 5-3 3-4 1zM9 8c2-1 4 0 5 1l-3 4c-2-1-3-3-2-5z" fill="#5bb04a" />
        <path d="M8 15l7-6 2 2-7 6-3 1z" fill="#f1c94b" stroke="#7a5a12" strokeWidth=".6" />
      </svg>
      <button type="button" className="mb-1 ml-[3px] w-[36px] text-[16px] leading-5 whitespace-nowrap">가 漢</button>
      <button type="button" aria-label="숨겨진 아이콘 표시" className="ml-2.5"><svg className="block h-1 w-2" viewBox="0 0 8 4"><path d="M0 4l4-4 4 4z" fill="#fff" /></svg></button>
      <svg className="ml-3 h-4 w-4" viewBox="0 0 16 16" fill="none">
        <path d="M1.500 1v14" stroke="#fff" strokeWidth="1.500" />
        <path d="M3 2c3-1 5 1 9 0v7c-4 1-6-1-9 0z" fill="#fff" />
        <circle cx="11" cy="11" r="4.500" fill="#d8271c" stroke="#fff" strokeWidth=".5" />
        <path d="M9 9l4 4M13 9l-4 4" stroke="#fff" strokeWidth="1.500" />
      </svg>
      <svg className="ml-2 h-4 w-4" viewBox="0 0 16 16" fill="none">
        <rect x="5" y="4" width="10" height="8" fill="#64788f" stroke="#fff" strokeWidth="1.500" />
        <path d="M6 14.500h8M2.500 7v7H6M.8 1v4h3.500V1" stroke="#fff" strokeWidth="1.500" />
      </svg>
      <svg className="ml-2 h-4 w-4" viewBox="0 0 16 16" fill="none">
        <path d="M0 5h3l4-4v14l-4-4H0z" fill="#fff" />
        <path d="M9 5.500q2 2.500 0 5M11 3.500q4 4.500 0 9M13 2q5 6 0 12" stroke="#fff" />
      </svg>
      <div className="ml-4 w-[72px] text-center text-[13px] leading-[17px] whitespace-nowrap">
        <div>오후 4:11</div>
        <div>2018-08-10</div>
      </div>
      <button type="button" aria-label="바탕 화면 보기" className="ml-2 h-[38px] w-4 border border-[#3b4a60] bg-linear-to-b from-[#9fb0c2] via-[#5d6f85] to-[#8a9bb0]" />
    </div>
  </footer>
);

const App = () => (
  <div className="flex h-screen w-full flex-col overflow-hidden bg-[#bfdbff] font-['Open_Sans','Noto_Sans_CJK_KR',sans-serif]">
    <Header />
    <Ribbon />
    <FormulaBar />
    <div className="mt-[3px] flex min-h-0 flex-1">
      <Sheet />
      <VerticalScroll />
    </div>
    <SheetTabs />
    <StatusBar />
    <Taskbar />
  </div>
);

export default App;
